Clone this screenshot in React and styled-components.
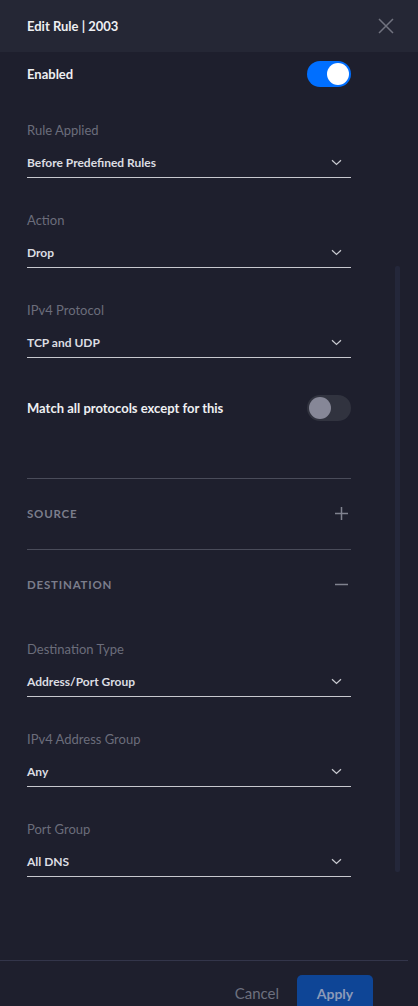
import styled, { createGlobalStyle } from "styled-components"

const GlobalStyle = createGlobalStyle`
  html, body { margin: 0; padding: 0; background: #1e1f2d; }
  body { font-family: Lato, "Open Sans", Arial, sans-serif; -webkit-font-smoothing: antialiased; }
  * { box-sizing: border-box; }
`

const destinationFields = [
  { label: "Destination Type", value: "Address/Port Group" },
  { label: "IPv4 Address Group", value: "Any" },
  { label: "Port Group", value: "All DNS" },
]

const Chevron = () => (
  <svg width="11" height="7" viewBox="0 0 11 7" fill="none">
    <path d="M1 1.2l4.5 4.3L10 1.2" stroke="#c9cad0" strokeWidth="1.2" />
  </svg>
)

const Select = ({ label, value, first }) => (
  <Field first={first}>
    <Label>{label}</Label>
    <SelectBox>
      <Value>{value}</Value>
      <Chevron />
    </SelectBox>
  </Field>
)

export default function App() {
  return (
    <>
      <GlobalStyle />
      <Panel>
        <Header>
          <Title>Edit Rule | 2003</Title>
          <CloseButton aria-label="close">
            <svg width="16" height="16" viewBox="0 0 16 16" fill="none">
              <path d="M1 1l14 14M15 1L1 15" stroke="#71737f" strokeWidth="1.5" />
            </svg>
          </CloseButton>
        </Header>
        <Body>
          <ToggleRow>
            <RowTitle>Enabled</RowTitle>
            <Toggle on />
          </ToggleRow>
          <Select first label="Rule Applied" value="Before Predefined Rules" />
          <Select label="Action" value="Drop" />
          <Select label="IPv4 Protocol" value="TCP and UDP" />
          <ToggleRow spaced>
            <RowTitle>Match all protocols except for this</RowTitle>
            <Toggle />
          </ToggleRow>
          <Divider top />
          <SectionRow>
            <SectionTitle>Source</SectionTitle>
            <svg width="13" height="13" viewBox="0 0 13 13" fill="none">
              <path d="M6.5 0v13M0 6.5h13" stroke="#80828f" strokeWidth="1.5" />
            </svg>
          </SectionRow>
          <Divider />
          <SectionRow>
            <SectionTitle>Destination</SectionTitle>
            <svg width="13" height="13" viewBox="0 0 13 13" fill="none">
              <path d="M0 6.5h13" stroke="#80828f" strokeWidth="1.5" />
            </svg>
          </SectionRow>
          {destinationFields.map((f, i) => (
            <Select key={f.label} label={f.label} value={f.value} first={i === 0 ? "dest" : undefined} />
          ))}
          <ScrollThumb />
        </Body>
        <Footer>
          <CancelButton>Cancel</CancelButton>
          <ApplyButton>Apply</ApplyButton>
        </Footer>
      </Panel>
    </>
  )
}

const Panel = styled.div`
  width: 418px;
  height: 1006px;
  overflow: hidden;
  background: #1e1f2d;
  display: flex;
  flex-direction: column;
`
const Header = styled.div`
  height: 52px;
  flex: 0 0 auto;
  background: #252735;
  display: flex;
  align-items: center;
  justify-content: space-between;
  padding: 0 24px 0 27px;
`
const Title = styled.div`
  color: #eeeff2;
  font-size: 13px;
  font-weight: 700;
`
const CloseButton = styled.div`
  display: flex;
  width: 16px;
  height: 16px;
`
const Body = styled.div`
  position: relative;
  height: 908px;
  flex: 0 0 auto;
  padding: 0 67px 0 27px;
  display: flex;
  flex-direction: column;
`
const ToggleRow = styled.div`
  height: 44px;
  margin-top: ${({ spaced }) => (spaced ? "28px" : "0")};
  display: flex;
  align-items: center;
  justify-content: space-between;
`
const RowTitle = styled.div`
  color: #eeeff2;
  font-size: 13px;
  font-weight: 700;
`
const Toggle = styled.div`
  position: relative;
  width: 44px;
  height: 26px;
  border-radius: 13px;
  background: ${({ on }) => (on ? "#006fff" : "#31333f")};
  &::after {
    content: "";
    position: absolute;
    top: 2px;
    left: ${({ on }) => (on ? "20px" : "2px")};
    width: 22px;
    height: 22px;
    border-radius: 50%;
    background: ${({ on }) => (on ? "#ffffff" : "#868797")};
  }
`
const Field = styled.div`
  margin-top: ${({ first }) => (first === "dest" ? "20px" : first ? "25px" : "33px")};
  display: flex;
  flex-direction: column;
  gap: 8px;
`
const Label = styled.div`
  height: 18px;
  line-height: 18px;
  color: #6b6d7b;
  font-size: 13px;
`
const SelectBox = styled.div`
  height: 31px;
  border-bottom: 1px solid #c7c8ce;
  display: flex;
  align-items: center;
  justify-content: space-between;
  padding-right: 9px;
`
const Value = styled.div`
  color: #dcdde2;
  font-size: 12px;
  font-weight: 700;
`
const Divider = styled.div`
  height: 1px;
  background: #4a4c5a;
  margin-top: ${({ top }) => (top ? "48px" : "0")};
`
const SectionRow = styled.div`
  height: 70px;
  display: flex;
  align-items: center;
  justify-content: space-between;
  padding: 0 3px 2px 0;
`
const SectionTitle = styled.div`
  color: #7b7d8b;
  font-size: 11.5px;
  font-weight: 700;
  text-transform: uppercase;
  letter-spacing: 0.8px;
`
const ScrollThumb = styled.div`
  position: absolute;
  left: 395px;
  top: 214px;
  width: 5px;
  height: 606px;
  border-radius: 2px;
  background: #24273a;
`
const Footer = styled.div`
  flex: 0 0 auto;
  margin-right: 10px;
  border-top: 1px solid #33354a;
  display: flex;
  justify-content: flex-end;
  align-items: flex-start;
  gap: 18px;
  padding: 14px 35px 0 0;
`
const CancelButton = styled.div`
  height: 36px;
  line-height: 37px;
  color: #6d707f;
  font-size: 15px;
`
const ApplyButton = styled.div`
  width: 76px;
  height: 36px;
  line-height: 37px;
  border-radius: 5px;
  background: #0e4596;
  color: #8c9ab8;
  font-size: 14px;
  font-weight: 700;
  text-align: center;
`
